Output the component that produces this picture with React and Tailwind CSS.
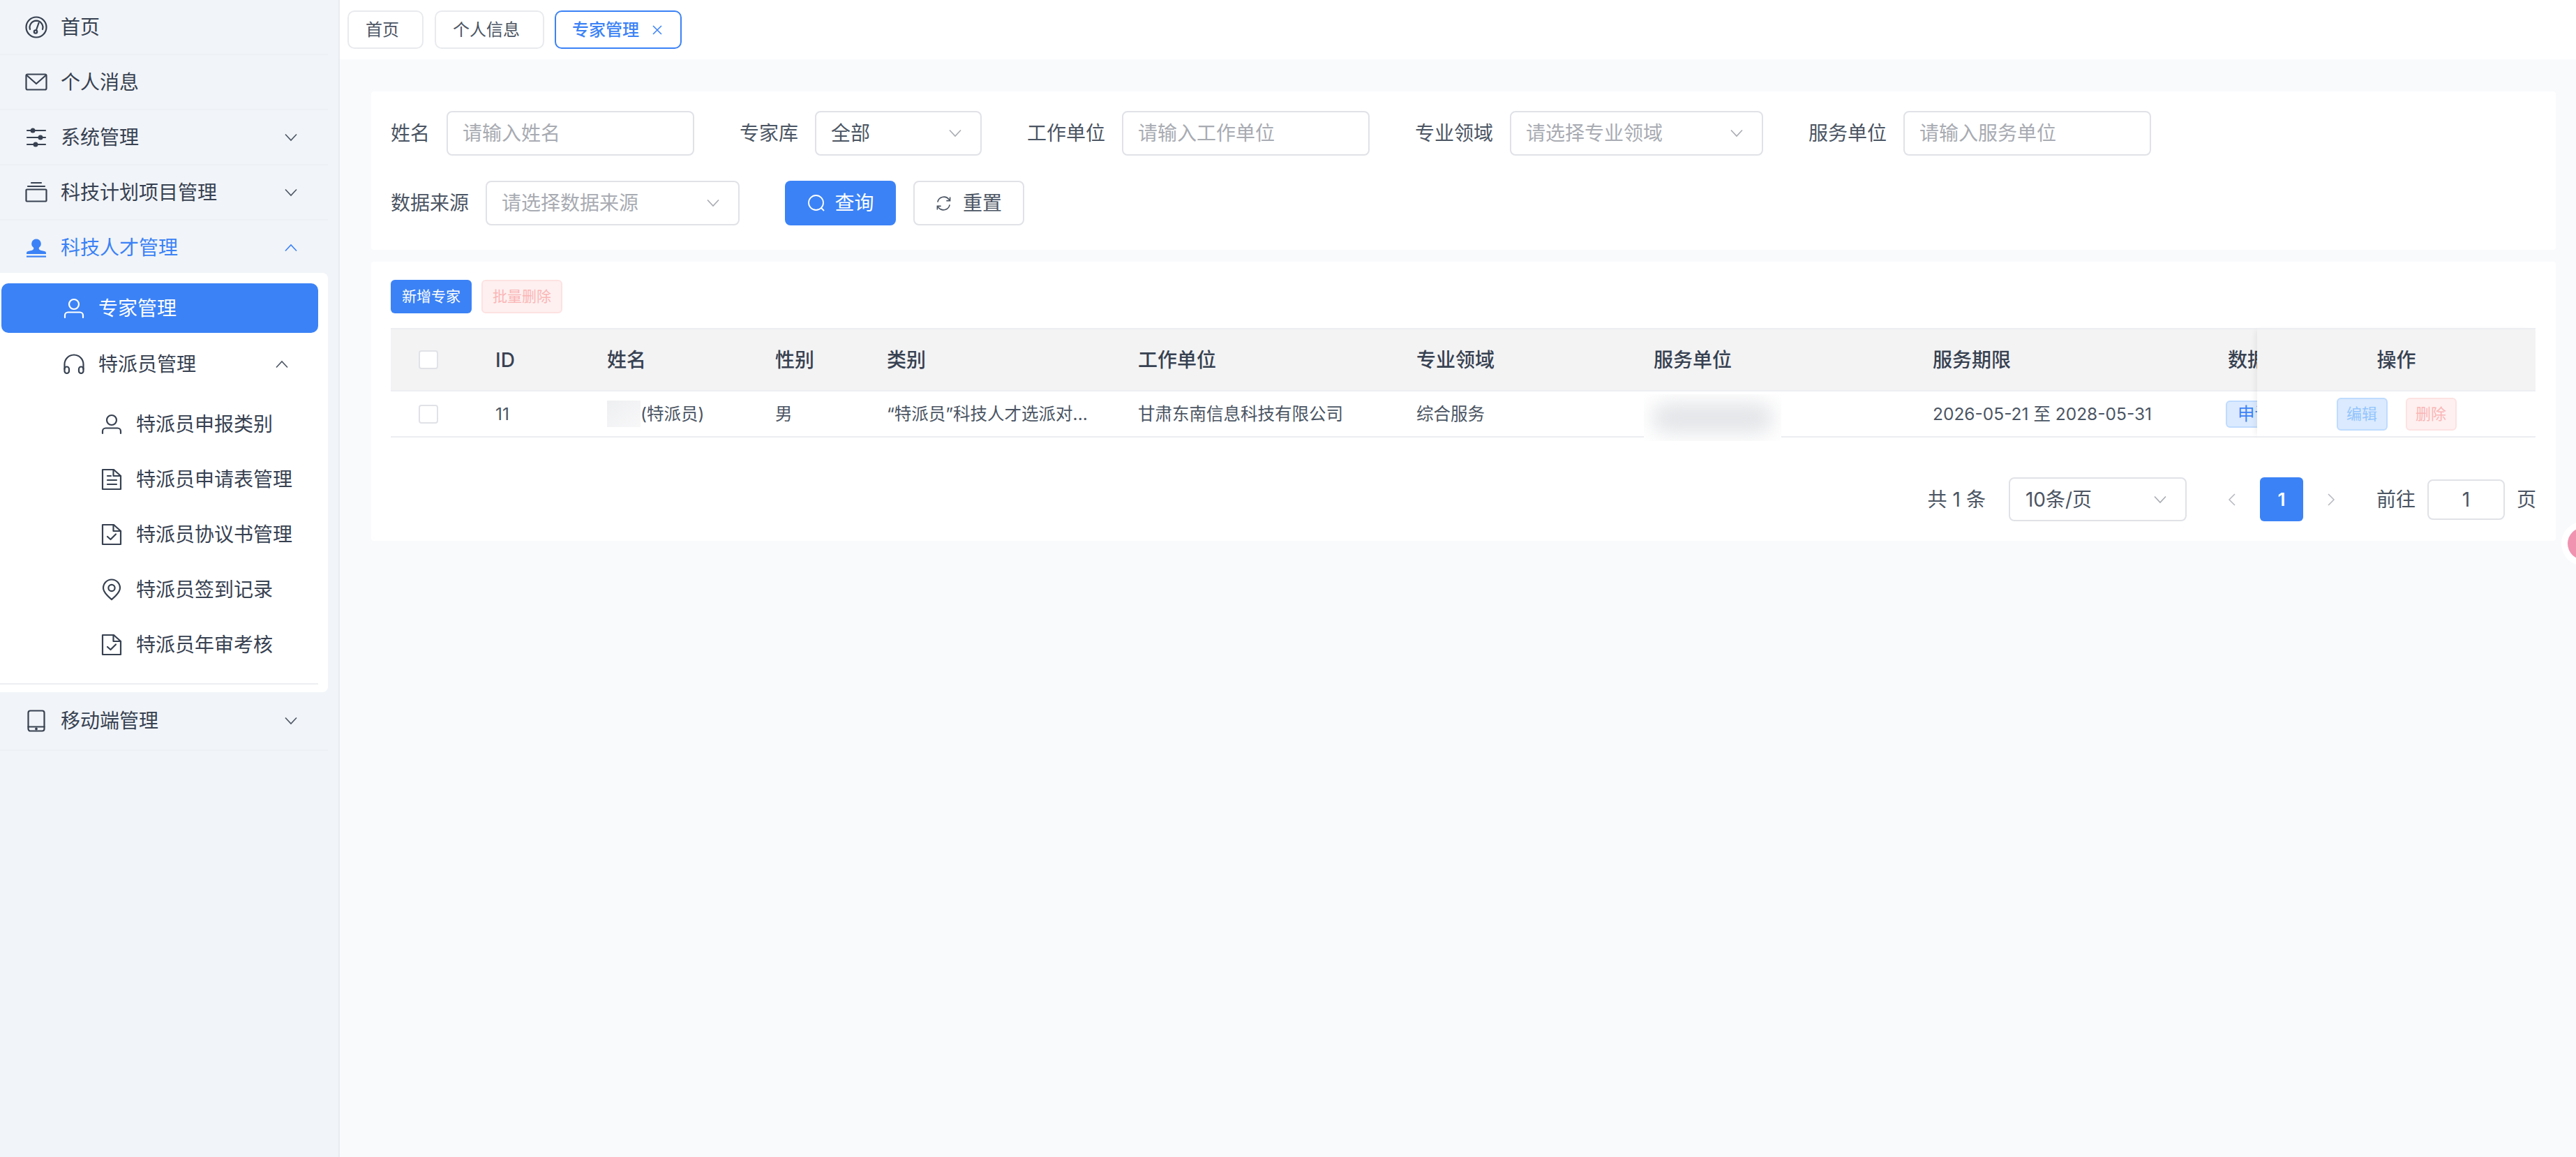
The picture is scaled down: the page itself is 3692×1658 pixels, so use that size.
import React from "react";

const FONT = "font-['Inter','Noto_Sans_CJK_SC',sans-serif]";

const Svg = ({ children, className = "" }) => (
  <svg
    viewBox="0 0 32 32"
    fill="none"
    stroke="currentColor"
    strokeWidth="2.2"
    strokeLinecap="round"
    strokeLinejoin="round"
    className={`w-[32px] h-[32px] shrink-0 ${className}`}
  >
    {children}
  </svg>
);

const Chevron = ({ up, className = "" }) => (
  <svg viewBox="0 0 20 12" fill="none" stroke="currentColor" strokeWidth="1.6" className={`w-[20px] h-[12px] shrink-0 ${className}`}>
    <path d={up ? "M2 10.5 L10 2 L18 10.5" : "M2 1.5 L10 10 L18 1.5"} />
  </svg>
);

const Odometer = () => (
  <Svg>
    <circle cx="16" cy="16" r="14.5" />
    <path d="M7 19 A9.6 9.6 0 0 1 16 6.6 A9.6 9.6 0 0 1 25 19" />
    <path d="M19.5 10 L16 20" />
    <circle cx="15" cy="22.5" r="2.2" />
  </Svg>
);
const Message = () => (
  <Svg>
    <rect x="1.5" y="4.5" width="29" height="22" rx="2" />
    <path d="M3 6.5 L16 18 L29 6.5" />
  </Svg>
);
const Sliders = () => (
  <Svg>
    <path d="M3 6 H29 M3 16 H29 M3 26 H29" />
    <circle cx="11" cy="6" r="2.4" fill="currentColor" />
    <circle cx="22" cy="16" r="2.4" fill="currentColor" />
    <circle cx="15" cy="26" r="2.4" fill="currentColor" />
  </Svg>
);
const BoxIcon = () => (
  <Svg>
    <rect x="1.5" y="11.5" width="29" height="17" rx="1" />
    <path d="M4 7 H28 M9 2 H23" />
  </Svg>
);
const Stamp = () => (
  <Svg>
    <path
      fill="currentColor"
      stroke="none"
      d="M16 3.5 a6.8 6.8 0 0 1 4.2 12.1 c-.9.9-.8 3.2 2 4.1 l5.4 1.3 a2.6 2.6 0 0 1 2.4 2.6 v1.4 H2 v-1.4 a2.6 2.6 0 0 1 2.4-2.6 l5.4-1.3 c2.8-.9 2.9-3.2 2-4.1 A6.8 6.8 0 0 1 16 3.5 z"
    />
    <rect x="2" y="27.5" width="28" height="2.2" fill="currentColor" stroke="none" />
  </Svg>
);
const User = () => (
  <Svg>
    <circle cx="16" cy="10" r="7" />
    <path d="M3 29 V26 a4.5 4.5 0 0 1 4.5-4.5 h17 a4.5 4.5 0 0 1 4.5 4.5 V29" />
  </Svg>
);
const Headset = () => (
  <Svg>
    <path d="M2.5 23 V16 a13.5 13.5 0 0 1 27 0 V23" />
    <rect x="2.5" y="19.5" width="6.5" height="9.5" rx="3.2" />
    <rect x="23" y="19.5" width="6.5" height="9.5" rx="3.2" />
  </Svg>
);
const Doc = () => (
  <Svg>
    <path d="M3 2 H19 L29 11 V30 H3 Z" />
    <path d="M18.5 2 V11 H29" />
    <path d="M10 11 H15 M10 17 H23 M10 23 H23" />
  </Svg>
);
const DocCheck = () => (
  <Svg>
    <path d="M3 2 H19 L29 11 V30 H3 Z" />
    <path d="M18.5 2 V11 H29" />
    <path d="M10 19 L14.5 23 L22 15.5" />
  </Svg>
);
const Pin = () => (
  <Svg>
    <path d="M16 30 C16 30 4 21 4 13.5 a12 12 0 0 1 24 0 C28 21 16 30 16 30 Z" />
    <circle cx="16" cy="13.5" r="4.6" />
  </Svg>
);
const Tablet = () => (
  <Svg>
    <rect x="4.5" y="1.5" width="23" height="29" rx="3" />
    <path d="M4.5 24.5 H27.5" />
    <circle cx="16" cy="27.5" r=".8" fill="currentColor" />
  </Svg>
);

const MenuRow = ({ icon, label, chevron, className = "h-[79px]" }) => (
  <div className={`${className} w-[470px] flex items-center pl-[36px] pr-[43px] gap-[19px] border-b-2 border-[#edf0f4] text-[#374151]`}>
    {icon}
    <span className="flex-1 text-[28px]">{label}</span>
    {chevron && <Chevron className="text-[#4b5563]" />}
  </div>
);

const SubRow = ({ icon, label }) => (
  <div className="h-[79px] flex items-center pl-[144px] gap-[19px] text-[#374151]">
    {icon}
    <span className="text-[28px]">{label}</span>
  </div>
);

const Sidebar = () => (
  <aside className="w-[487px] shrink-0 bg-[#f1f4f8] border-r-2 border-[#e8ebf0]">
    <MenuRow icon={<Odometer />} label="首页" />
    <MenuRow icon={<Message />} label="个人消息" />
    <MenuRow icon={<Sliders />} label="系统管理" chevron />
    <MenuRow icon={<BoxIcon />} label="科技计划项目管理" chevron />
    <div className="h-[75px] pt-[3px] w-[470px] flex items-center pl-[36px] pr-[43px] gap-[19px] text-[#3b82f6]">
      <Stamp />
      <span className="flex-1 text-[28px]">科技人才管理</span>
      <Chevron up />
    </div>
    <div className="w-[470px] h-[601px] bg-white rounded-r-[8px] pt-[15px]">
      <div className="ml-[2px] w-[454px] h-[71px] rounded-[10px] bg-[#3b82f6] text-white flex items-center pl-[88px] gap-[19px]">
        <User />
        <span className="text-[28px]">专家管理</span>
      </div>
      <div className="h-[79px] w-[456px] mt-[5px] flex items-center pl-[90px] pr-[42px] gap-[19px] text-[#374151]">
        <Headset />
        <span className="flex-1 text-[28px]">特派员管理</span>
        <Chevron up className="text-[#4b5563]" />
      </div>
      <div className="w-[456px] h-[413px] mt-[7px] border-b-2 border-[#eceef2]">
        <SubRow icon={<User />} label="特派员申报类别" />
        <SubRow icon={<Doc />} label="特派员申请表管理" />
        <SubRow icon={<DocCheck />} label="特派员协议书管理" />
        <SubRow icon={<Pin />} label="特派员签到记录" />
        <SubRow icon={<DocCheck />} label="特派员年审考核" />
      </div>
    </div>
    <MenuRow icon={<Tablet />} label="移动端管理" chevron className="h-[84px]" />
  </aside>
);

const Tab = ({ label, active }) => (
  <div className={`h-[55px] flex items-center gap-[18px] rounded-[10px] border-2 text-[24px] ${active ? "-ml-[1px] pl-[23px] pr-[25px] border-[#3b82f6] text-[#3b82f6] font-medium" : "pl-[24px] pr-[33px] border-[#e8eaed] text-[#4b5563]"}`}>
    <span>{label}</span>
    {active && (
      <svg viewBox="0 0 16 16" fill="none" stroke="currentColor" strokeWidth="1.5" className="w-[16px] h-[16px]">
        <path d="M2 2 L14 14 M14 2 L2 14" />
      </svg>
    )}
  </div>
);

const Field = ({ label, children }) => (
  <div className="flex items-center gap-[24px]">
    <span className="text-[28px] text-[#4b5563]">{label}</span>
    {children}
  </div>
);

const TextInput = ({ placeholder, width }) => (
  <input
    readOnly
    placeholder={placeholder}
    className={`h-[64px] ${width} border-2 border-[#e0e2e7] rounded-[8px] pl-[21px] text-[28px] outline-none placeholder:text-[#a8abb2]`}
  />
);

const SelectBox = ({ text, placeholder, width }) => (
  <div className={`h-[64px] ${width} border-2 border-[#e0e2e7] rounded-[8px] pl-[21px] pr-[26px] flex items-center justify-between`}>
    <span className={`text-[28px] ${placeholder ? "text-[#a8abb2]" : "text-[#4b5563]"}`}>{text}</span>
    <Chevron className="text-[#a8abb2]" />
  </div>
);

const FilterCard = () => (
  <section className="bg-white rounded-[4px] h-[227px] pt-[28px] pl-[28px] flex flex-col gap-[36px]">
    <div className="flex items-center gap-[65px]">
      <Field label="姓名"><TextInput placeholder="请输入姓名" width="w-[355px]" /></Field>
      <Field label="专家库"><SelectBox text="全部" width="w-[239px]" /></Field>
      <Field label="工作单位"><TextInput placeholder="请输入工作单位" width="w-[355px]" /></Field>
      <Field label="专业领域"><SelectBox text="请选择专业领域" placeholder width="w-[363px]" /></Field>
      <Field label="服务单位"><TextInput placeholder="请输入服务单位" width="w-[355px]" /></Field>
    </div>
    <div className="flex items-center">
      <Field label="数据来源"><SelectBox text="请选择数据来源" placeholder width="w-[364px]" /></Field>
      <button className="ml-[65px] w-[159px] h-[64px] rounded-[8px] bg-[#3b82f6] text-white text-[28px] flex items-center justify-center gap-[14px]">
        <svg viewBox="0 0 26 26" fill="none" stroke="currentColor" strokeWidth="1.8" className="w-[26px] h-[26px]">
          <circle cx="12.5" cy="12.5" r="10.5" />
          <path d="M20 20 L24 24" />
        </svg>
        查询
      </button>
      <button className="ml-[25px] w-[159px] h-[64px] rounded-[8px] bg-white border-2 border-[#e0e2e7] text-[#4b5563] text-[28px] flex items-center justify-center gap-[16px]">
        <svg viewBox="0 0 24 24" fill="none" stroke="currentColor" strokeWidth="1.7" className="w-[23px] h-[23px]">
          <path d="M3 10 A9.5 9.5 0 0 1 19.5 5.5 L21 7.5" />
          <path d="M21 14 A9.5 9.5 0 0 1 4.5 18.5 L3 16.5" />
          <path d="M21.5 2.5 V8 H16" />
          <path d="M2.5 21.5 V16 H8" />
        </svg>
        重置
      </button>
    </div>
  </section>
);

const Checkbox = () => (
  <div className="w-[28px] h-[27px] bg-white border-2 border-[#e0e2e7] rounded-[4px] ml-[40px]" />
);

const COLS = ["w-[150px]", "w-[160px]", "w-[241px]", "w-[160px]", "w-[360px]", "w-[399px]", "w-[340px]", "w-[400px]", "w-[423px]", "w-[200px]"];

const Table = () => {
  const headers = ["", "ID", "姓名", "性别", "类别", "工作单位", "专业领域", "服务单位", "服务期限", "数据来源"];
  return (
    <div className="flex w-[3074px] mt-[21px]">
      <div className="flex-1 overflow-hidden">
        <div className="flex w-max h-[91px] items-center bg-[#f3f3f4] border-t-2 border-[#eceef1] border-b-2 text-[28px] font-medium text-[#374151]">
          {headers.map((h, i) => (
            <div key={i} className={`${COLS[i]} shrink-0`}>
              {i === 0 ? <Checkbox /> : h}
            </div>
          ))}
        </div>
        <div className="flex w-max h-[66px] items-center border-b-2 border-[#ebedf1] text-[24.5px] text-[#4b5563]">
          <div className={`${COLS[0]} shrink-0`}><Checkbox /></div>
          <div className={`${COLS[1]} shrink-0`}>11</div>
          <div className={`${COLS[2]} shrink-0 flex items-center`}>
            <span className="w-[48px] h-[38px] bg-gradient-to-br from-[#eeeff1] to-[#f8f8f9]" />
            <span>(特派员)</span>
          </div>
          <div className={`${COLS[3]} shrink-0`}>男</div>
          <div className={`${COLS[4]} shrink-0`}>“特派员”科技人才选派对...</div>
          <div className={`${COLS[5]} shrink-0`}>甘肃东南信息科技有限公司</div>
          <div className={`${COLS[6]} shrink-0`}>综合服务</div>
          <div className={`${COLS[7]} shrink-0`} />
          <div className={`${COLS[8]} shrink-0`}>2026-05-21 至 2028-05-31</div>
          <div className={`${COLS[9]} shrink-0`}>
            <span className="-ml-[3px] h-[39px] w-[100px] px-[15px] rounded-[6px] bg-[#dbeafe] border-2 border-[#bfdbfe] text-[#3b82f6] flex items-center">申请</span>
          </div>
        </div>
      </div>
      <div className="w-[399px] shrink-0 relative z-10 bg-white shadow-[-6px_0_8px_-4px_rgba(0,0,0,0.07)]">
        <div className="h-[91px] flex items-center justify-center bg-[#f3f3f4] border-t-2 border-b-2 border-[#eceef1] text-[28px] font-medium text-[#374151]">
          操作
        </div>
        <div className="h-[66px] flex items-center justify-center gap-[26px] border-b-2 border-[#ebedf1] text-[22px]">
          <span className="w-[73px] h-[47px] rounded-[6px] bg-[#dbeafe] border-2 border-[#bfdbfe] text-[#93c5fd] flex items-center justify-center">编辑</span>
          <span className="w-[73px] h-[47px] rounded-[6px] bg-[#fef0f0] border-2 border-[#fde2e2] text-[#fab6b6] flex items-center justify-center">删除</span>
        </div>
      </div>
    </div>
  );
};

const Pagination = () => (
  <div className="flex justify-end items-center h-[63px] mt-[57px] text-[28px] text-[#4b5563]">
    <span className="flex gap-[8px]"><span>共</span><span>1</span><span>条</span></span>
    <div className="ml-[33px] w-[255px] h-[63px] border-2 border-[#e0e2e7] rounded-[8px] pl-[22px] pr-[26px] flex items-center justify-between">
      <span>10条/页</span>
      <Chevron className="text-[#a8abb2]" />
    </div>
    <div className="ml-[34px] w-[62px] flex justify-center text-[#b4b7be]">
      <svg viewBox="0 0 12 20" fill="none" stroke="currentColor" strokeWidth="1.5" className="w-[12px] h-[20px]"><path d="M10 2 L2 10 L10 18" /></svg>
    </div>
    <div className="ml-[9px] w-[62px] h-[63px] rounded-[6px] bg-[#3b82f6] text-white text-[26px] font-semibold flex items-center justify-center">1</div>
    <div className="ml-[9px] w-[62px] flex justify-center text-[#b4b7be]">
      <svg viewBox="0 0 12 20" fill="none" stroke="currentColor" strokeWidth="1.5" className="w-[12px] h-[20px]"><path d="M2 2 L10 10 L2 18" /></svg>
    </div>
    <span className="ml-[34px]">前往</span>
    <div className="ml-[17px] w-[111px] h-[58px] border-2 border-[#e0e2e7] rounded-[8px] flex items-center justify-center">1</div>
    <span className="ml-[17px]">页</span>
  </div>
);

export default function App() {
  return (
    <div className={`${FONT} relative flex min-h-[1658px] overflow-hidden bg-[#f8fafc]`}>
      <Sidebar />
      <main className="flex-1 min-w-0">
        <div className="h-[85px] bg-white flex items-center gap-[16px] pl-[11px]">
          <Tab label="首页" />
          <Tab label="个人信息" />
          <Tab label="专家管理" active />
        </div>
        <div className="pt-[46px] pl-[45px] pr-[29px] flex flex-col gap-[17px]">
          <FilterCard />
          <section className="bg-white rounded-[4px] h-[400px] pt-[26px] px-[28px] relative">
            <div className="flex gap-[14px] text-[21px]">
              <button className="w-[116px] h-[48px] rounded-[6px] bg-[#3b82f6] text-white">新增专家</button>
              <button className="w-[116px] h-[48px] rounded-[6px] bg-[#fef0f0] border-2 border-[#fde2e2] text-[#fab6b6]">批量删除</button>
            </div>
            <Table />
            <Pagination />
            {/* blurred-out service unit */}
            <div className="absolute left-[1824px] top-[190px] w-[197px] h-[67px] z-10 bg-white overflow-hidden">
              <div className="w-[175px] h-[44px] mt-[12px] ml-[11px] bg-[#e3e5e8] blur-[14px] rounded-full" />
            </div>
          </section>
        </div>
      </main>
      {/* floating assistant button */}
      <div className="absolute top-[747px] left-[3671px] w-[64px] h-[64px] rounded-full bg-white flex items-center justify-center">
        <div className="w-[46px] h-[46px] rounded-full bg-[#f093b0]" />
      </div>
    </div>
  );
}
